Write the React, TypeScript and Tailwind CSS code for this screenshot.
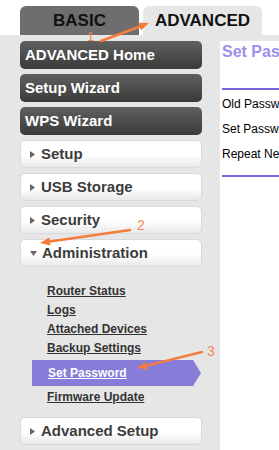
import React from "react";

const darkBtn =
  "h-[28px] w-[182px] rounded-[5px] bg-[linear-gradient(#606060,#3a3a3a)] flex items-center pl-[5px] text-[15px] font-bold text-white";
const lightBtn =
  "h-[28px] w-[182px] rounded-[5px] border border-[#d9d9d9] bg-[linear-gradient(#ffffff_55%,#e9e9e9)] flex items-center pl-[9px] text-[15px] font-bold text-[#3c3c3c]";

function Right() {
  return (
    <svg width="5" height="7" viewBox="0 0 5 7" className="mr-[6px]">
      <polygon points="0,0 5,3.5 0,7" fill="#666" />
    </svg>
  );
}
function Down() {
  return (
    <svg width="7" height="5" viewBox="0 0 7 5" className="mr-[5px]">
      <polygon points="0,0 7,0 3.5,5" fill="#666" />
    </svg>
  );
}

export default function App() {
  const sub = "h-[19px] leading-[19px] pl-[27px] text-[12px] font-bold text-[#333] underline";
  return (
    <div className="relative w-[279px] h-[450px] overflow-hidden bg-white font-['Liberation_Sans',Arial,sans-serif]">
      <div className="flex h-[35px] items-end pl-[20px] gap-[4px]">
        <div className="w-[119px] h-[29px] rounded-t-[6px] bg-[#6e6e6e] flex items-center justify-center text-[17px] font-bold text-[#111]">
          BASIC
        </div>
        <div className="w-[119px] h-[29px] rounded-t-[6px] bg-[#e6e6e6] flex items-center justify-center text-[17px] font-bold text-[#111]">
          ADVANCED
        </div>
      </div>
      <div className="flex h-[415px] bg-[#e6e6e6]">
        <div className="w-[220px] shrink-0 pl-[20px] pt-[6px] flex flex-col">
          <div className="flex flex-col gap-[5px]">
            <div className={darkBtn}>ADVANCED Home</div>
            <div className={darkBtn}>Setup Wizard</div>
            <div className={darkBtn}>WPS Wizard</div>
            <div className={lightBtn}>
              <Right />
              Setup
            </div>
            <div className={lightBtn}>
              <Right />
              USB Storage
            </div>
            <div className={lightBtn}>
              <Right />
              Security
            </div>
            <div className={lightBtn}>
              <Down />
              Administration
            </div>
          </div>
          <div className="pt-[15px] flex flex-col">
            <div className={sub}>Router Status</div>
            <div className={sub}>Logs</div>
            <div className={sub}>Attached Devices</div>
            <div className={sub}>Backup Settings</div>
            <div className="mt-[2px] ml-[12px] h-[26px] w-[169px] bg-[#857dd8] [clip-path:polygon(0_0,calc(100%_-_8px)_0,100%_50%,calc(100%_-_8px)_100%,0_100%)] flex items-center pl-[16px] text-[12px] font-bold text-white underline">
              Set Password
            </div>
            <div className={"mt-[2px] " + sub}>Firmware Update</div>
          </div>
          <div className={"mt-[10px] " + lightBtn}>
            <Right />
            Advanced Setup
          </div>
        </div>
        <div className="flex-1 pt-[6px] min-w-0">
          <div className="h-full bg-white pl-[2px] overflow-hidden whitespace-nowrap">
            <div className="mt-[1px] h-[20px] leading-[20px] text-[16px] font-bold text-[#9b90ec]">
              Set Password
            </div>
            <div className="mt-[26px] h-[2px] bg-[#7469d9]" />
            <div className="pt-[2px] text-[12px] text-black">
              <div className="h-[25px] leading-[25px]">Old Password</div>
              <div className="h-[25px] leading-[25px]">Set Password</div>
              <div className="h-[25px] leading-[25px]">Repeat New Password</div>
            </div>
            <div className="mt-[8px] h-[2px] bg-[#7469d9]" />
          </div>
        </div>
      </div>
      <svg
        className="absolute inset-0 pointer-events-none"
        width="279"
        height="450"
        viewBox="0 0 279 450"
      >
        <g stroke="#f47c3c" strokeWidth="2.5" strokeLinecap="round" fill="none">
          <line x1="101" y1="41" x2="140" y2="26.5" />
          <line x1="130" y1="230" x2="50" y2="241.6" />
          <line x1="202" y1="352" x2="146.7" y2="365.6" />
        </g>
        <g fill="#f47c3c">
          <polygon points="149,23 141,30.2 138.2,22.8" />
          <polygon points="40,243 49.3,237.6 50.5,245.6" />
          <polygon points="137,368 147.7,369.5 145.7,361.7" />
        </g>
        <g fill="#f5884f" fontFamily="'Liberation Sans', Arial, sans-serif">
          <text x="87" y="41" fontSize="13">1</text>
          <text x="137" y="230" fontSize="14">2</text>
          <text x="207" y="356" fontSize="14">3</text>
        </g>
      </svg>
    </div>
  );
}
